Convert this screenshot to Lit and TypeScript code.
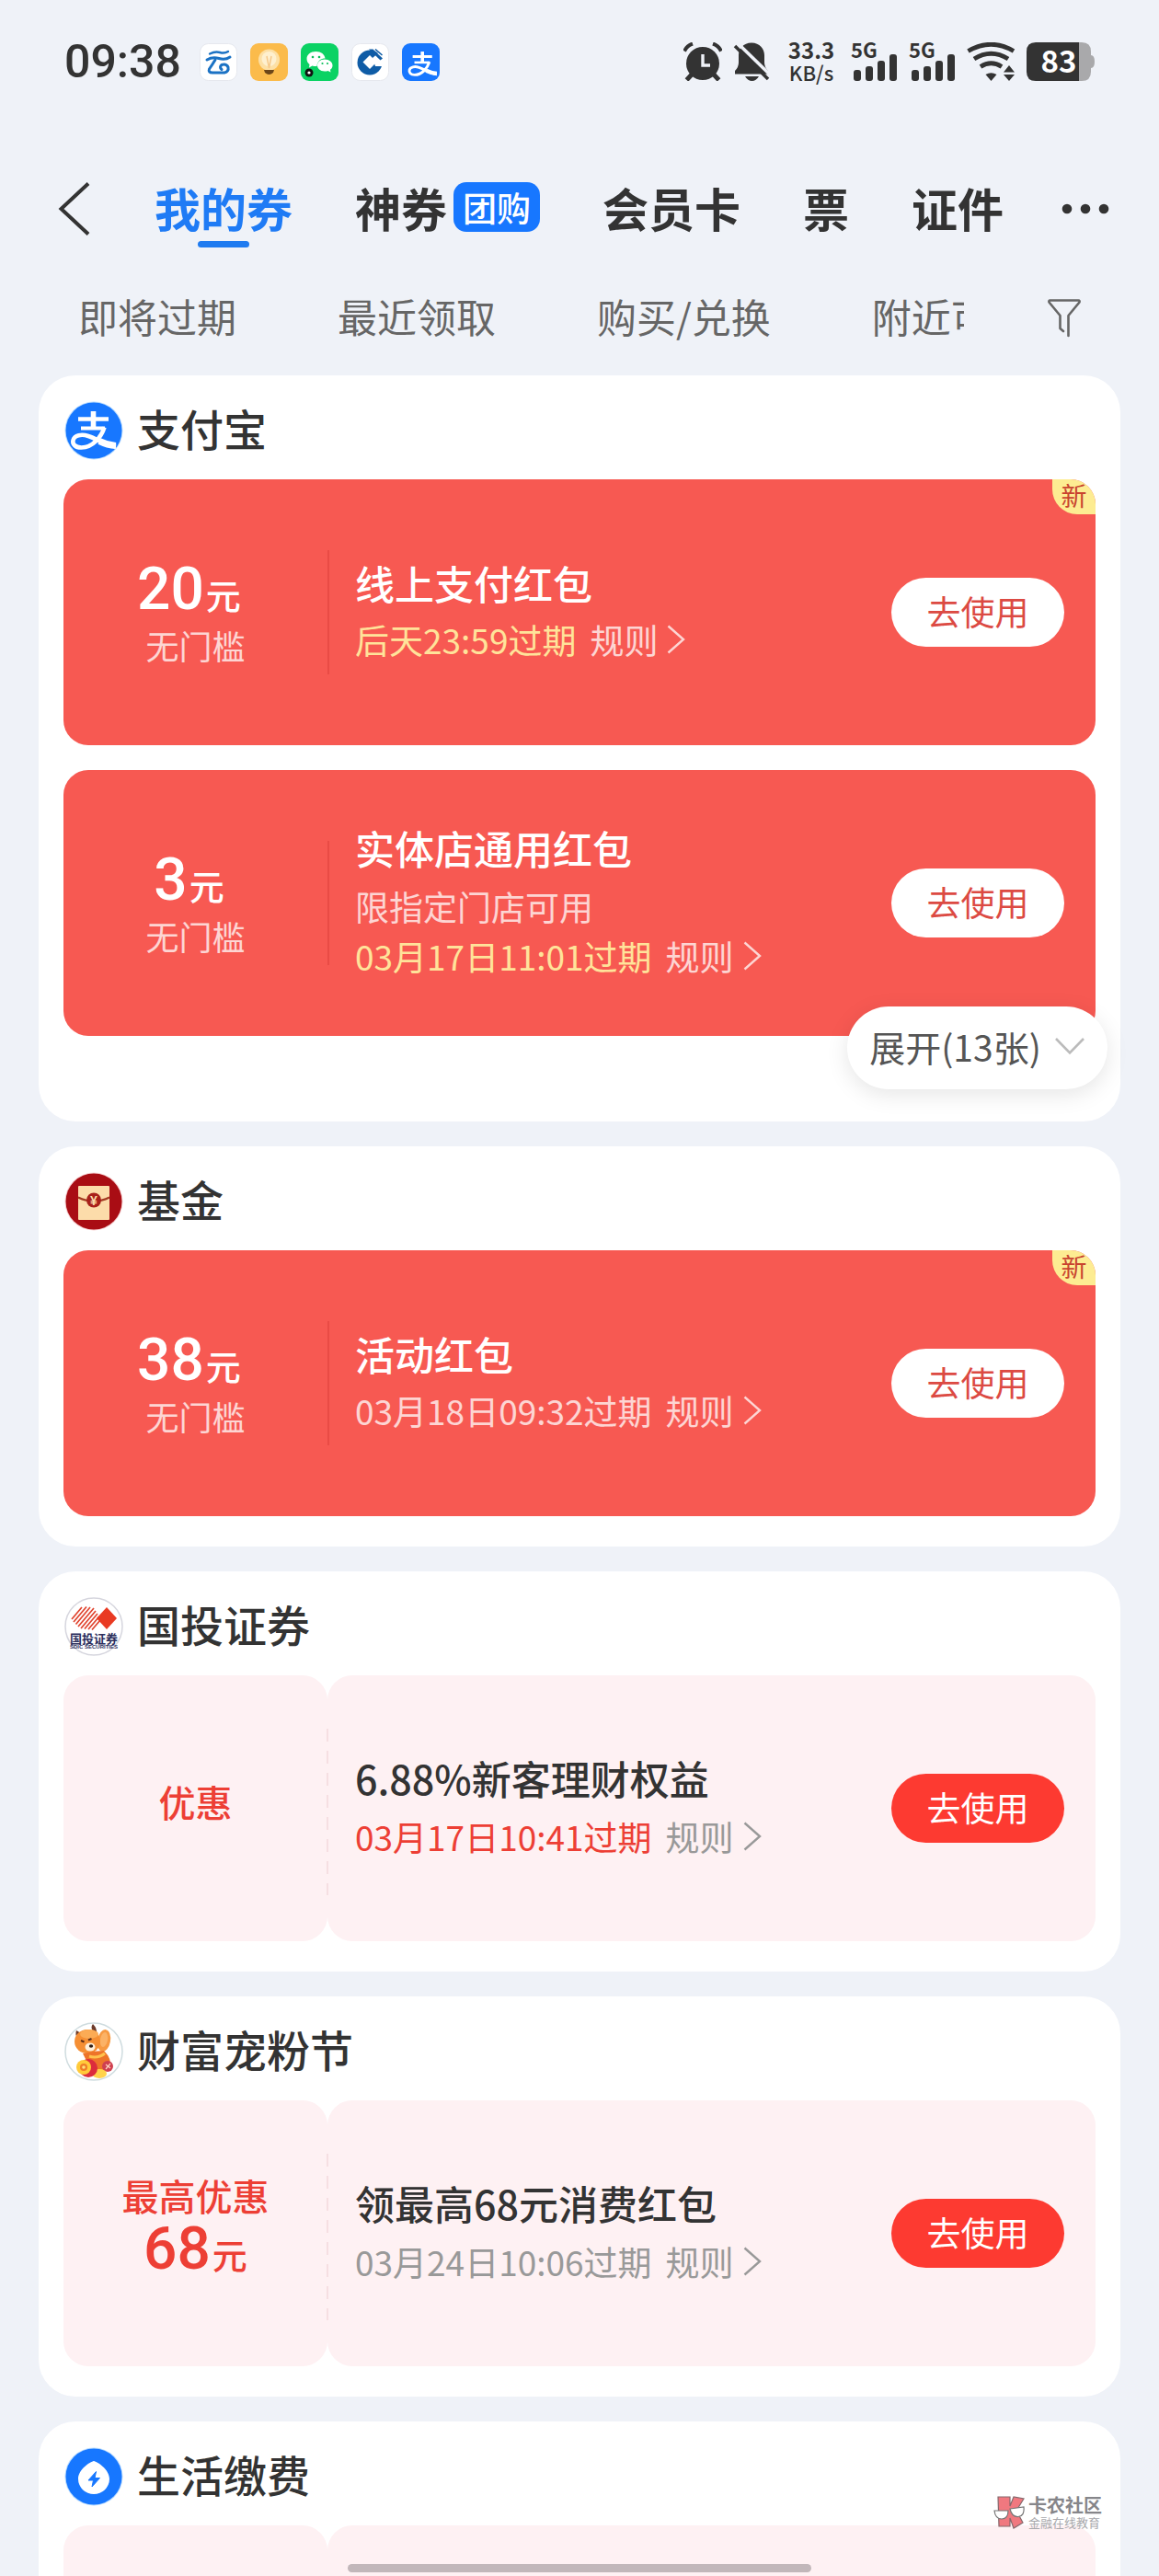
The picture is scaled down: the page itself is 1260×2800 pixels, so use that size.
import { LitElement, html, svg, css, nothing, TemplateResult } from "lit";
import { customElement, property, state } from "lit/decorators.js";
import { classMap } from "lit/directives/class-map.js";

interface Coupon {
  amount?: string;
  lead?: string;
  note?: string;
  title: string;
  limit?: string;
  expiry: string;
  urgent?: boolean;
  fresh?: boolean;
}

interface Group {
  icon: string;
  name: string;
  tone: "red" | "pink";
  /** A null entry is a coupon whose contents have not loaded yet. */
  coupons: (Coupon | null)[];
  more?: number;
}

const GROUPS: Group[] = [
  {
    icon: "alipay",
    name: "支付宝",
    tone: "red",
    more: 13,
    coupons: [
      { amount: "20", note: "无门槛", title: "线上支付红包", expiry: "后天23:59过期", urgent: true, fresh: true },
      { amount: "3", note: "无门槛", title: "实体店通用红包", limit: "限指定门店可用", expiry: "03月17日11:01过期", urgent: true },
    ],
  },
  {
    icon: "fund",
    name: "基金",
    tone: "red",
    coupons: [{ amount: "38", note: "无门槛", title: "活动红包", expiry: "03月18日09:32过期", fresh: true }],
  },
  {
    icon: "sdic",
    name: "国投证券",
    tone: "pink",
    coupons: [{ lead: "优惠", title: "6.88%新客理财权益", expiry: "03月17日10:41过期", urgent: true }],
  },
  {
    icon: "bull",
    name: "财富宠粉节",
    tone: "pink",
    coupons: [{ lead: "最高优惠", amount: "68", title: "领最高68元消费红包", expiry: "03月24日10:06过期" }],
  },
  { icon: "utility", name: "生活缴费", tone: "pink", coupons: [null] },
];

const alipayMark = svg`
  <g fill="none" stroke="#fff" stroke-linecap="butt">
    <path d="M15 19.5H48" stroke-width="4.6"/>
    <path d="M31.500 11V30" stroke-width="5.600"/>
    <path d="M18 29.500H44" stroke-width="4"/>
    <path d="M43.500 28.500C40 39 31 50.500 18.500 50.500C11.500 50.500 8.500 46.500 9.500 42.500C11 37 18.500 35.500 26 38C36 41.300 44 47.500 56 49.500" stroke-width="4.600"/>
    <path d="M38 43.500C44 46.500 49 48 56 48.500" stroke-width="7"/>
  </g>`;

const GROUP_ICONS: Record<string, TemplateResult> = {
  alipay: html`<svg viewBox="0 0 64 64" aria-hidden="true">
    <circle cx="32" cy="32" r="31.500" fill="#b9dcff"/><circle cx="32" cy="32" r="30.500" fill="#1777ff"/>
    ${alipayMark}
  </svg>`,
  fund: html`<svg viewBox="0 0 64 64" aria-hidden="true">
    <circle cx="32" cy="32" r="31.500" fill="#f6cfd0"/><circle cx="32" cy="32" r="30.500" fill="#a90d14"/>
    <rect x="15" y="15" width="34" height="37" rx="1" fill="#fcdcaa"/>
    <path d="M15 27.500Q32 36 49 27.500" fill="none" stroke="#a33a22" stroke-width="2"/>
    <circle cx="32" cy="30.500" r="8" fill="#a8201a"/>
    <text x="32" y="35.500" text-anchor="middle" font-size="14" font-weight="700" fill="#fcdcaa" font-family="Liberation Sans, sans-serif">¥</text>
  </svg>`,
  sdic: html`<svg viewBox="0 0 64 64" aria-hidden="true">
    <circle cx="32" cy="32" r="31" fill="#fff" stroke="#d6d6de" stroke-width="1.500"/>
    <g stroke="#e0442f" stroke-width="1.700" fill="none">
      <path d="M8 24L19 11M10 27L24 10.500M12.500 29.500L28 11M15 32L32 12M18 34L34 15M22 34.500L36 18M26 35L38 21M30 35.500L39 25"/>
    </g>
    <path d="M46 11L57 23L46 35L35 23Z" fill="#e93a22"/>
    <text x="32" y="50" text-anchor="middle" font-size="13" font-weight="700" fill="#2b2e5c" font-family="Noto Sans CJK SC, sans-serif">国投证券</text>
    <text x="32" y="56" text-anchor="middle" font-size="6" font-weight="700" fill="#2b2e5c" font-family="Liberation Sans, sans-serif">SDIC SECURITIES</text>
  </svg>`,
  bull: html`<svg viewBox="0 0 64 64" aria-hidden="true">
    <circle cx="32" cy="32" r="31" fill="#fff" stroke="#cfdcdf" stroke-width="1.500"/>
    <path d="M15 18Q11 14 13 9Q18 11 19 16ZM31 10Q28 5 31 2Q36 7 35 13Z" fill="#6d3b2a"/>
    <ellipse cx="43" cy="20" rx="7" ry="12" fill="#f79a42" transform="rotate(10 43 20)"/>
    <ellipse cx="43" cy="19" rx="4" ry="8" fill="#fbb266" transform="rotate(10 43 19)"/>
    <ellipse cx="25" cy="21" rx="14" ry="13" fill="#f58f34"/>
    <ellipse cx="27" cy="13" rx="10" ry="5" fill="#fbab55"/>
    <ellipse cx="28" cy="27" rx="5.500" ry="4.600" fill="#fff0dc"/>
    <ellipse cx="29" cy="26" rx="2.200" ry="1.800" fill="#2f1c14"/>
    <path d="M18 20L21.500 21.500M26 19.500L29.500 18" stroke="#5c2c18" stroke-width="2"/>
    <path d="M20 34Q32 31 43 31Q52 40 50 50Q42 57 30 54Z" fill="#ee7429"/>
    <path d="M27 37Q36 40 44 34" stroke="#ffc24d" stroke-width="3" fill="none"/>
    <circle cx="47" cy="48" r="6" fill="#cf4050"/>
    <path d="M45 46L50 50M50 45L45 51" stroke="#ffd3c0" stroke-width="1.200"/>
    <ellipse cx="38" cy="56" rx="8" ry="5" fill="#ffd34a"/>
    <circle cx="26" cy="50" r="10" fill="#dc2c3c"/>
    <circle cx="21" cy="49" r="8" fill="#ffca3a"/>
    <circle cx="21" cy="49" r="4" fill="#ef7c28"/><circle cx="21" cy="49" r="1.800" fill="#ffe27a"/>
  </svg>`,
  utility: html`<svg viewBox="0 0 64 64" aria-hidden="true">
    <circle cx="32" cy="32" r="31.500" fill="#b9dcff"/><circle cx="32" cy="32" r="30.500" fill="#1777ff"/>
    <path d="M32 15C36 16 49 24 49 34.500A17 16.500 0 0 1 15 34.500C15 24 28 16 32 15Z" fill="#fff"/>
    <path d="M34.500 26.500L26 36H31.500L30 43L38.500 33.500H33Z" fill="#1777ff" stroke="#1777ff" stroke-linejoin="round"/>
  </svg>`,
};

/** A single voucher: its value on the left, its terms and the action on the right. */
@customElement("coupon-item")
export class CouponItem extends LitElement {
  @property({ attribute: false }) coupon: Coupon | null = null;
  @property() tone: "red" | "pink" = "red";

  static styles = css`
    :host { display: block; }
    * { box-sizing: border-box; }
    .coupon {
      position: relative;
      display: grid;
      grid-template-columns: 287px 1fr;
      min-height: 289px;
    }
    .red { background: #f75952; color: #fff; border-radius: 27px; }
    .pink .value, .pink .body { background: #fef1f3; border-radius: 27px; }
    .value {
      display: flex;
      flex-direction: column;
      align-items: center;
      justify-content: center;
      padding-top: 4px;
    }
    .pink .value { color: #ed3f35; padding: 0 0 16px; }
    .amount {
      display: flex;
      align-items: baseline;
      gap: 2px;
      font-size: 38px;
      font-weight: 500;
      line-height: 62px;
    }
    .number { font-family: Roboto, sans-serif; font-size: 64px; font-weight: 500; }
    .red .amount { padding-right: 14px; }
    .lead { font-size: 40px; font-weight: 500; line-height: 56px; }
    .note { font-size: 36px; line-height: 48px; opacity: 0.75; }
    .body {
      position: relative;
      display: flex;
      align-items: center;
      justify-content: space-between;
      padding: 0 34px 0 30px;
    }
    .body::before {
      content: "";
      position: absolute;
      left: 0;
      top: 77px;
      bottom: 77px;
      width: 2px;
      background: #e94b45;
    }
    .pink .body::before {
      left: -1px;
      top: 58px;
      bottom: 50px;
      background: repeating-linear-gradient(#f6dfe2 0 14px, transparent 14px 24px);
    }
    .pink .blank::before { display: none; }
    .info { padding-bottom: 8px; }
    .title { margin: 0; font-size: 43px; font-weight: 500; line-height: 60px; }
    .terms { margin: 0; font-size: 37px; line-height: 52px; }
    .limit { margin-top: 8px; opacity: 0.75; }
    .row { display: flex; align-items: center; gap: 15px; }
    .red .row { margin-top: 6px; }
    .red .limit + .row { margin-top: 2px; }
    .pink .title { color: #333; }
    .pink .row { margin-top: 8px; color: #999; }
    .expiry { opacity: 0.75; }
    .pink .expiry, .urgent .expiry { opacity: 1; }
    .red .urgent .expiry { color: #ffe39a; }
    .pink .urgent .expiry { color: #ed3f35; }
    .rules {
      display: flex;
      align-items: center;
      gap: 10px;
      color: inherit;
      text-decoration: none;
    }
    .red .rules { opacity: 0.75; }
    .rules svg { width: 20px; height: 32px; }
    .use {
      flex: none;
      width: 188px;
      height: 75px;
      padding: 0 0 4px;
      border: 0;
      border-radius: 38px;
      background: #fff;
      color: #dc4a43;
      font: inherit;
      font-size: 37px;
      cursor: pointer;
    }
    .pink .use { background: #fd3a31; color: #fff; }
    .fresh {
      position: absolute;
      top: 0;
      right: 0;
      width: 47px;
      height: 38px;
      border-radius: 0 27px 0 27px;
      background: #fdec92;
      color: #c9432f;
      font-size: 28px;
      line-height: 34px;
      text-align: center;
    }
  `;

  render() {
    const c = this.coupon;
    if (!c) {
      return html`<article class="coupon ${this.tone}" aria-busy="true"><div class="value"></div><div class="body blank"></div></article>`;
    }
    return html`
      <article class="coupon ${this.tone}">
        <div class="value">
          ${c.lead ? html`<span class="lead">${c.lead}</span>` : nothing}
          ${c.amount ? html`<span class="amount"><span class="number">${c.amount}</span>元</span>` : nothing}
          ${c.note ? html`<span class="note">${c.note}</span>` : nothing}
        </div>
        <div class="body">
          <div class=${classMap({ info: true, urgent: !!c.urgent })}>
            <h3 class="title">${c.title}</h3>
            ${c.limit ? html`<p class="terms limit">${c.limit}</p>` : nothing}
            <div class="terms row">
              <span class="expiry">${c.expiry}</span>
              <a class="rules" href="#rules">规则<svg viewBox="0 0 20 32" aria-hidden="true"><path d="M1.500 1.500L18 16L1.500 30.500" fill="none" stroke="currentColor" stroke-width="2.400"/></svg></a>
            </div>
          </div>
          <button class="use" type="button">去使用</button>
        </div>
        ${c.fresh ? html`<span class="fresh">新</span>` : nothing}
      </article>
    `;
  }
}

/** The phone's status bar. */
@customElement("status-bar")
export class StatusBar extends LitElement {
  static styles = css`
    :host { display: block; flex: none; }
    .bar {
      display: flex;
      align-items: center;
      justify-content: space-between;
      height: 134px;
      padding: 0 70px;
      color: #333;
    }
    .side { display: flex; align-items: center; }
    .time { font-family: Roboto, sans-serif; font-size: 50px; font-weight: 500; line-height: 56px; margin-right: 20px; }
    .apps { display: flex; gap: 14px; }
    .apps svg { width: 41px; height: 41px; }
    .system { gap: 12px; height: 42px; }
    .system svg { display: block; height: 42px; }
    .alarm, .bell { width: 42px; }
    .speed {
      display: flex;
      flex-direction: column;
      align-items: center;
      width: 54px;
      font-size: 24px;
      font-weight: 700;
      line-height: 24px;
      margin: 0 4px 2px;
    }
    .unit { font-size: 22px; font-weight: 500; }
    .signal { width: 51px; }
    .wifi { width: 53px; }
    .battery { width: 74px; }
  `;

  private signal() {
    return html`<svg class="signal" viewBox="0 0 51 42" fill="#333" aria-label="5G">
      <text x="0" y="17" font-size="22" font-weight="700" font-family="Noto Sans CJK SC, sans-serif">5G</text>
      <rect x="3" y="30" width="8" height="12" rx="3"/><rect x="16" y="26" width="8" height="16" rx="3"/>
      <rect x="29" y="20" width="8" height="22" rx="3"/><rect x="42" y="13" width="8" height="29" rx="3"/>
    </svg>`;
  }

  render() {
    return html`
      <div class="bar">
        <div class="side">
          <span class="time">09:38</span>
          <div class="apps">
            <svg viewBox="0 0 41 41" aria-hidden="true">
              <rect x="0.500" y="0.500" width="40" height="40" rx="9" fill="#fff" stroke="#e6e8ee"/>
              <g fill="none" stroke="#1b72c4" stroke-width="3" stroke-linecap="round">
                <path d="M11 11.500Q17 8.500 22 10T31 9" stroke-width="2.400"/>
                <path d="M8 18Q14 14.500 21 16.500T33 15"/>
                <path d="M17 18Q14 23 10.500 28Q9 32 14 32H27Q32 31 31 26Q29 22 24 23.500Q21 26 24 28.500"/>
              </g>
            </svg>
            <svg viewBox="0 0 41 41" aria-hidden="true">
              <rect width="41" height="41" rx="9" fill="#fbbb4b"/>
              <circle cx="20.500" cy="18" r="11.500" fill="#fde0a5"/><circle cx="20.500" cy="17" r="8" fill="#fef0cf"/>
              <path d="M18 14L20.500 27L23 14" fill="none" stroke="#f6c98b" stroke-width="1.500"/>
              <path d="M15 29H26L25 32Q20.500 36 16 32Z" fill="#6c4619"/>
            </svg>
            <svg viewBox="0 0 41 41" aria-hidden="true">
              <rect width="41" height="41" rx="9" fill="#0bd264"/>
              <path d="M16.500 9C10.500 9 6.500 12.500 6.500 17C6.500 19.500 7.700 21.500 9.500 23L9 26.500L12.500 24.500Q15 25.300 17.500 25C18 19 22 16.500 26.500 16.500C26 12 22 9 16.500 9Z" fill="#fff"/>
              <path d="M26 17.500C21 17.500 18 20.500 18 24S21 30.500 26 30.500Q28 30.500 29.500 30L32.500 31.500L32 28.800C34 27.500 34.500 25.500 34.500 24C34.500 20.500 31 17.500 26 17.500Z" fill="#fff"/>
              <g fill="#0bbf5b"><circle cx="13" cy="15" r="1.300"/><circle cx="20" cy="15" r="1.300"/><circle cx="23.500" cy="22" r="1.100"/><circle cx="29" cy="22" r="1.100"/></g>
              <circle cx="9" cy="32" r="4.500" fill="#111"/><circle cx="9" cy="32" r="1.600" fill="#fff"/>
            </svg>
            <svg viewBox="0 0 41 41" aria-hidden="true">
              <rect x="0.500" y="0.500" width="40" height="40" rx="9" fill="#fff" stroke="#e6e8ee"/>
              <circle cx="20" cy="21" r="13.500" fill="#0f5ca6"/>
              <path d="M20 13L27.500 20.500L20 28L12.500 20.500Z" fill="#fff"/>
              <path d="M23 16L30 10L38 19V25H26Z" fill="#fff"/>
              <path d="M19 6.500H23.500L34 16.500L31.500 18.500Z" fill="#0f5ca6"/>
              <path d="M26 6.500L33.500 13" stroke="#0f5ca6" stroke-width="1.600"/>
            </svg>
            <svg viewBox="0 0 41 41" aria-hidden="true">
              <rect width="41" height="41" rx="9" fill="#1777ff"/>
              <svg x="2" y="2" width="37" height="37" viewBox="0 0 64 64">${alipayMark}</svg>
            </svg>
          </div>
        </div>
        <div class="side system">
          <svg class="alarm" viewBox="0 0 42 42" aria-hidden="true">
            <g fill="none" stroke="#333" stroke-width="4"><path d="M1 9.500Q4 3.500 10 1.500M32 1.500Q38 3.500 41 9.500"/><path d="M9 35L3.500 41M33 35L38.500 41" stroke-width="5"/></g>
            <circle cx="21" cy="23" r="18" fill="#333"/><path d="M21 13V25H29" fill="none" stroke="#eff2f8" stroke-width="3.400"/>
          </svg>
          <svg class="bell" viewBox="0 0 42 42" aria-hidden="true">
            <path d="M20 0.500C29 0.500 34 7 34 14V22Q34 27 38 31V34.500H2V31Q6 27 6 22V14C6 7 11 0.500 20 0.500Z" fill="#333"/>
            <path d="M13 37H28Q25 42 20.500 42T13 37Z" fill="#333"/>
            <path d="M5 1L42 37" stroke="#eff2f8" stroke-width="3.600"/><path d="M2 4L38 40" stroke="#333" stroke-width="3.600"/>
          </svg>
          <span class="speed"><span>33.3</span><span class="unit">KB/s</span></span>
          ${this.signal()} ${this.signal()}
          <svg class="wifi" viewBox="0 0 53 42" aria-hidden="true">
            <g fill="none" stroke="#333" stroke-width="4.800"><path d="M1.500 9.500Q26.500 -5 51 9.500"/><path d="M8 18Q26.500 6.500 45 18"/><path d="M15 26.500Q26.500 19 38 26.500"/></g>
            <path d="M20.500 35Q26.500 31.500 32.500 35L26.500 42Z" fill="#333"/>
            <path d="M46 25L52 32.500H40ZM46 42L40 35H52Z" fill="#333"/>
          </svg>
          <svg class="battery" viewBox="0 0 74 42" aria-label="83%">
            <path d="M57 0H60Q70 0 70 10V14Q74 14 74 21T70 28V32Q70 42 60 42H57Z" fill="#a9a9ab"/>
            <path d="M10 0H57V42H10Q0 42 0 32V10Q0 0 10 0Z" fill="#333"/>
            <text x="35" y="33" text-anchor="middle" font-size="33" font-weight="700" fill="#fff" font-family="Noto Sans CJK SC, sans-serif">83</text>
          </svg>
        </div>
      </div>
    `;
  }
}

@customElement("app-root")
export class AppRoot extends LitElement {
  @state() private tab = 0;

  static styles = css`
    :host {
      display: block;
      font-family: "Noto Sans CJK SC", "Noto Sans", sans-serif;
      color: #333;
    }
    * { box-sizing: border-box; }
    .screen {
      position: relative;
      display: flex;
      flex-direction: column;
      height: 100vh;
      overflow: hidden;
      background: #eff2f8;
    }
    button { border: 0; padding: 0; background: none; color: inherit; font: inherit; cursor: pointer; }
    svg { display: block; }
    .top {
      display: flex;
      flex: none;
      align-items: center;
      height: 186px;
      padding: 0 52px 0 62px;
    }
    .back svg { width: 38px; height: 58px; }
    .tabs { display: flex; flex: 1; gap: 68px; margin-left: 68px; }
    .tab {
      position: relative;
      display: flex;
      align-items: center;
      gap: 7px;
      padding-bottom: 4px;
      font-size: 50px;
      font-weight: 700;
      line-height: 72px;
      white-space: nowrap;
    }
    .active { color: #1f7bf5; }
    .active::after {
      content: "";
      position: absolute;
      bottom: -4px;
      left: 50%;
      width: 56px;
      height: 7px;
      margin-left: -28px;
      border-radius: 4px;
      background: #1f7bf0;
    }
    .tag {
      padding: 0 10px;
      border-radius: 14px;
      background: #1777ff;
      color: #fff;
      font-size: 37px;
      font-weight: 500;
      line-height: 54px;
    }
    .more svg { width: 56px; height: 12px; }
    .filters {
      display: flex;
      flex: none;
      align-items: center;
      height: 52px;
      padding: 0 85px;
      color: #666;
    }
    .filter-list {
      display: flex;
      flex: 1;
      gap: 110px;
      min-width: 0;
      overflow: hidden;
      padding-bottom: 6px;
    }
    .filter-list button { flex: none; font-size: 43px; line-height: 60px; white-space: nowrap; }
    .funnel { margin-left: 91px; }
    .funnel svg { width: 36px; height: 42px; }
    .groups {
      display: flex;
      flex-direction: column;
      gap: 27px;
      padding: 36px 42px 0;
    }
    .group {
      position: relative;
      flex: none;
      padding: 0 27px 33px;
      border-radius: 40px;
      background: #fff;
    }
    .collapsed { padding-bottom: 93px; }
    .head {
      display: flex;
      align-items: center;
      gap: 15px;
      height: 113px;
      padding: 7px 0 0 1px;
    }
    .head svg { width: 64px; height: 64px; }
    .name { margin: 0; padding-bottom: 6px; font-size: 47px; font-weight: 500; line-height: 60px; }
    .coupons { display: flex; flex-direction: column; gap: 27px; }
    .expand {
      position: absolute;
      right: 14px;
      bottom: 35px;
      display: flex;
      align-items: center;
      justify-content: center;
      gap: 14px;
      width: 283px;
      height: 90px;
      padding-bottom: 4px;
      border-radius: 45px;
      background: #fff;
      box-shadow: 0 6px 24px rgba(0, 0, 0, 0.1);
      color: #555;
      font-size: 39px;
      white-space: nowrap;
    }
    .expand svg { width: 34px; height: 20px; }
    .mark {
      position: absolute;
      right: 62px;
      bottom: 50px;
      display: flex;
      align-items: center;
      gap: 4px;
      color: #86868a;
    }
    .mark svg { width: 34px; height: 36px; }
    .mark-text { display: flex; flex-direction: column; }
    .mark-name { font-size: 20px; font-weight: 700; line-height: 22px; }
    .mark-sub { font-size: 13px; line-height: 16px; color: #a8a8ac; }
    .home {
      position: absolute;
      left: 30%;
      right: 30%;
      bottom: 4px;
      height: 9px;
      border-radius: 5px;
      background: #c2b7ba;
    }
  `;

  private tabs: { label: string; tag?: string }[] = [
    { label: "我的券" },
    { label: "神券", tag: "团购" },
    { label: "会员卡" },
    { label: "票" },
    { label: "证件" },
  ];

  private filters = ["即将过期", "最近领取", "购买/兑换", "附近可用"];

  render() {
    return html`
      <div class="screen">
        <status-bar></status-bar>
        <header class="top">
          <button class="back" type="button" aria-label="返回">
            <svg viewBox="0 0 38 58"><path d="M34 1.500L4.500 29L34 56.500" fill="none" stroke="#333" stroke-width="4"/></svg>
          </button>
          <nav class="tabs">
            ${this.tabs.map(
              (t, i) => html`<button type="button" class=${classMap({ tab: true, active: i === this.tab })} @click=${() => (this.tab = i)}>
                ${t.label}${t.tag ? html`<span class="tag">${t.tag}</span>` : nothing}
              </button>`
            )}
          </nav>
          <button class="more" type="button" aria-label="更多">
            <svg viewBox="0 0 56 12" fill="#333"><circle cx="8" cy="6" r="5.300"/><circle cx="28" cy="6" r="5.300"/><circle cx="48" cy="6" r="5.300"/></svg>
          </button>
        </header>
        <div class="filters">
          <div class="filter-list">${this.filters.map((f) => html`<button type="button">${f}</button>`)}</div>
          <button class="funnel" type="button" aria-label="筛选">
            <svg viewBox="0 0 36 42" fill="none" stroke="#666" stroke-width="2.600" stroke-linejoin="round" stroke-linecap="round">
              <path d="M22.500 40V18L34.500 3.500Q35 1.500 33.500 1.500H2.500Q1 1.500 1.500 3.500L13.500 18V32L17 35"/>
            </svg>
          </button>
        </div>
        <main class="groups">
          ${GROUPS.map(
            (g) => html`<section class=${classMap({ group: true, collapsed: !!g.more })}>
              <div class="head">${GROUP_ICONS[g.icon]}<h2 class="name">${g.name}</h2></div>
              <div class="coupons">
                ${g.coupons.map((c) => html`<coupon-item .coupon=${c} .tone=${g.tone}></coupon-item>`)}
              </div>
              ${g.more
                ? html`<button class="expand" type="button">展开(${g.more}张)<svg viewBox="0 0 34 20"><path d="M2 2L17 17.500L32 2" fill="none" stroke="#bbb" stroke-width="2.600"/></svg></button>`
                : nothing}
            </section>`
          )}
        </main>
        <div class="mark">
          <svg viewBox="0 0 34 36" aria-hidden="true">
            <path d="M5 1H18V11L22 1L33 3L25 16L32 29L22 35L18 24V33H6Z" fill="#f0787f" stroke="#86686c" stroke-width="1.200"/>
            <path d="M1 16H16Q16 25 9 25T1 16ZM18 14L33 12Q34 22 27 22.500T18 14Z" fill="#fff" stroke="#777" stroke-width="1.200"/>
          </svg>
          <div class="mark-text"><span class="mark-name">卡农社区</span><span class="mark-sub">金融在线教育</span></div>
        </div>
        <div class="home"></div>
      </div>
    `;
  }
}
